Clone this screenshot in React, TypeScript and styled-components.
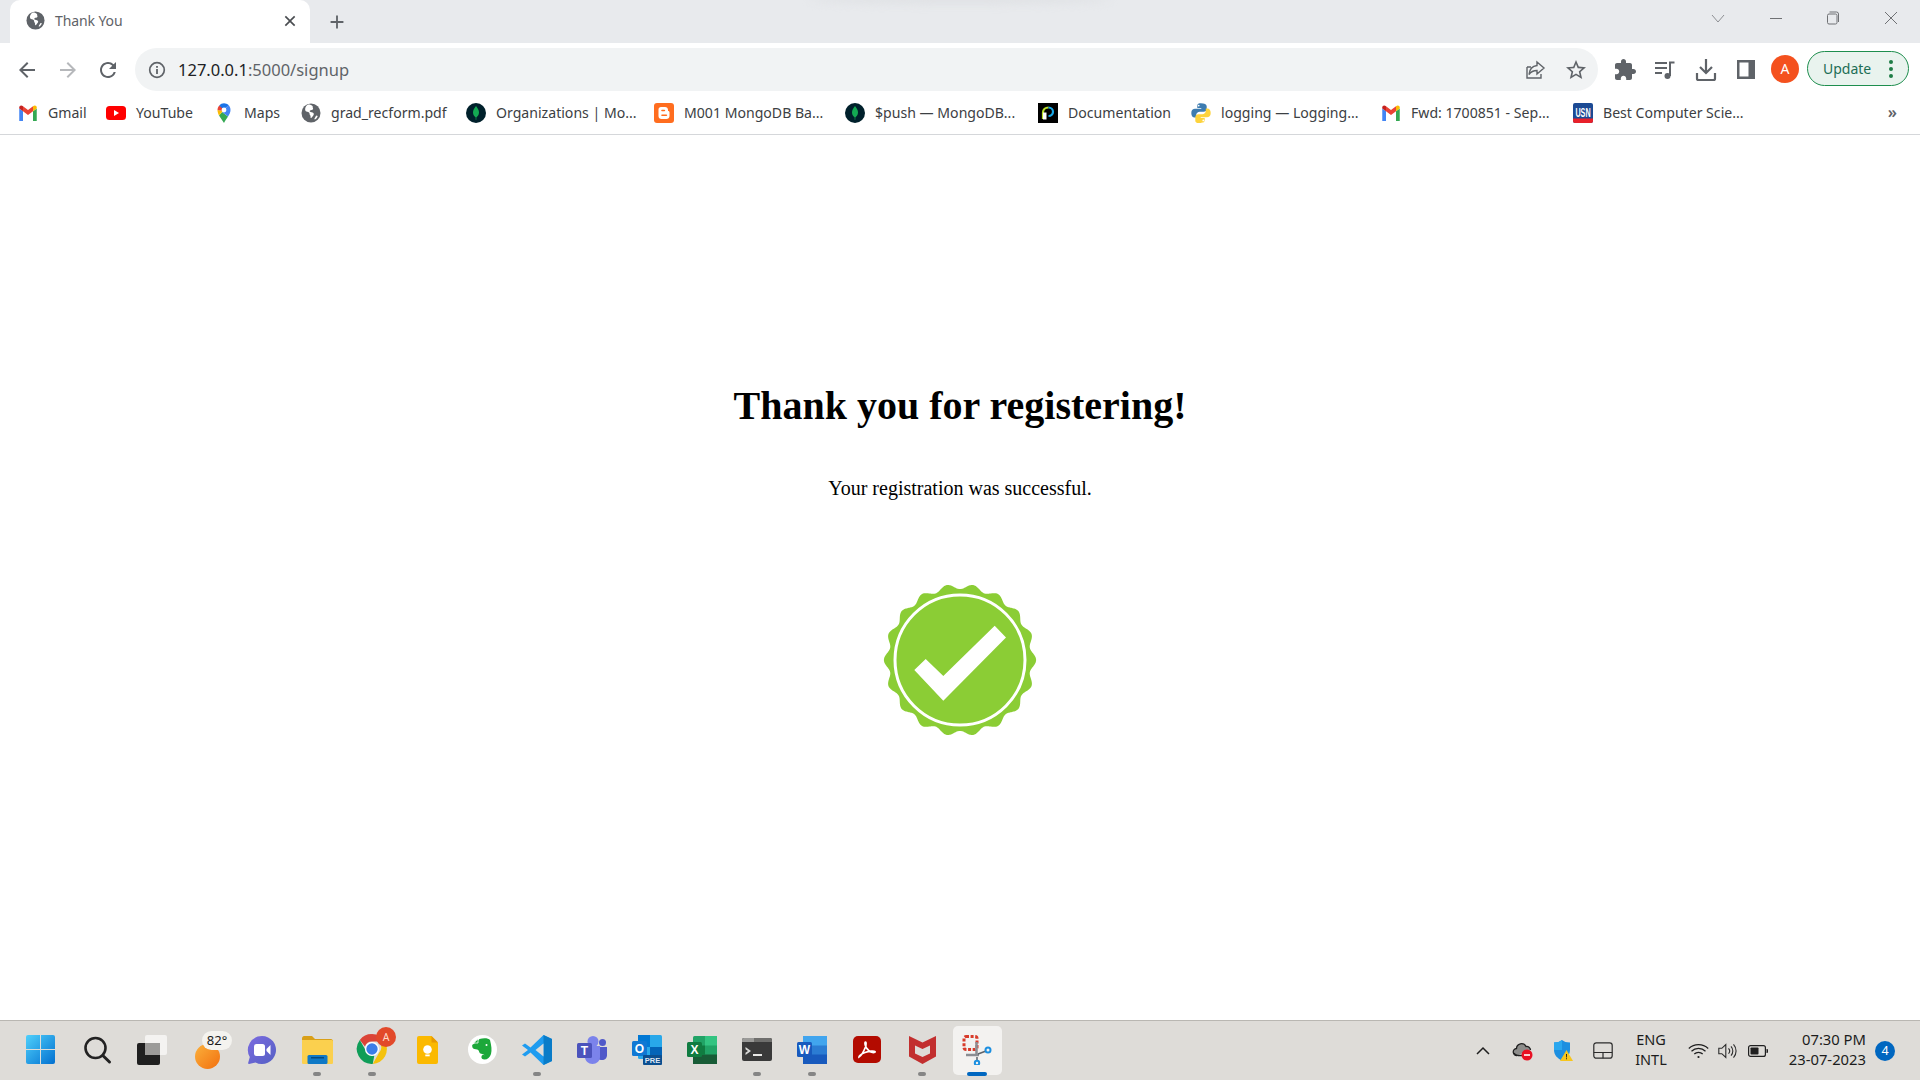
import React from "react";
import styled, { createGlobalStyle } from "styled-components";

const Global = createGlobalStyle`
  html, body { margin: 0; padding: 0; background: #fff; overflow: hidden; }
  #root { width: 1920px; height: 1080px; }
`;

const UI = `"Noto Sans", "Open Sans", "Liberation Sans", sans-serif`;

const Screen = styled.div`
  width: 1920px; height: 1080px; display: flex; flex-direction: column; font-family: ${UI}; background: #fff;
`;
const TabStrip = styled.div`
  height: 43px; flex: none; background: #e8eaed; display: flex; align-items: flex-end; padding-left: 10px; position: relative;
`;
const Smudge = styled.div`
  position: absolute; left: 810px; top: -6px; width: 300px; height: 10px; background: #dfe1e4; filter: blur(4px); border-radius: 50%;
`;
const Tab = styled.div`
  width: 300px; height: 43px; background: #fff; border-radius: 10px 10px 0 0; display: flex; align-items: center; padding: 0 10px 2px 16px; box-sizing: border-box; gap: 10px;
`;
const TabTitle = styled.span`
  flex: 1; font-size: 14px; color: #5f6368; letter-spacing: -0.1px; margin-top: -1px;
`;
const NewTab = styled.div`
  width: 24px; height: 24px; margin: 0 0 9px 15px; display: flex; align-items: center; justify-content: center; color: #5f6368;
`;
const WindowControls = styled.div`
  margin-left: auto; height: 36px; align-self: flex-start; display: flex; padding-right: 0;
`;
const WindowButton = styled.div<{ $w: number }>`
  width: ${p => p.$w}px; display: flex; align-items: center; justify-content: center; color: #6f7174;
`;
const Toolbar = styled.div`
  height: 48px; flex: none; display: flex; align-items: flex-end; background: #fff; position: relative;
`;
const NavButtons = styled.div`
  display: flex; width: 135px; height: 43px; padding-left: 7px; box-sizing: border-box; align-items: center;
`;
const NavIcon = styled.div<{ $w?: number }>`
  width: ${p => p.$w ?? 40.5}px; display: flex; justify-content: center; align-items: center; flex: none;
`;
const Omnibox = styled.div`
  width: 1463px; height: 43px; background: #f1f3f4; border-radius: 22px; display: flex; align-items: center; padding-left: 12px; box-sizing: border-box;
`;
const Url = styled.div`
  flex: 1; margin-left: 11px; font-size: 16.5px; color: #5f6368; white-space: nowrap;
  b { font-weight: 400; color: #202124; }
`;
const OmniActions = styled.div`
  display: flex; padding-right: 2px;
`;
const ToolActions = styled.div`
  height: 43px; display: flex; align-items: center; padding-left: 7px;
`;
const Avatar = styled.div`
  width: 28px; height: 28px; border-radius: 50%; background: #f4511e; color: #fff; font-size: 14px; display: flex; align-items: center; justify-content: center; margin: 0 8px 2px 5px;
`;
const UpdatePill = styled.div`
  width: 102px; height: 35px; border: 1.5px solid #1e8e4e; border-radius: 18px; background: #e9f3ee; box-sizing: border-box; color: #1d6e55; font-size: 14px; display: flex; align-items: center; padding-left: 15px; justify-content: space-between; padding-right: 15px; margin-bottom: 2px;
`;
const Dots = styled.div`
  display: flex; flex-direction: column; gap: 3px;
  i { width: 4px; height: 4px; border-radius: 50%; background: #1e7d45; display: block; }
`;
const Bookmarks = styled.div`
  height: 44px; flex: none; box-sizing: border-box; border-bottom: 1px solid #d5d7da; display: flex; align-items: center; padding-left: 18px; background: #fff;
`;
const Bookmark = styled.div<{ $w: number }>`
  width: ${p => p.$w}px; flex: none; display: flex; align-items: center; gap: 10px; font-size: 14.1px; color: #3c4043; white-space: nowrap;
`;
const More = styled.div`
  margin-left: auto; margin-right: 23px; font-size: 16px; color: #5f6368; font-weight: 600; margin-top: -2px;
`;
const Main = styled.main`
  flex: 1; display: flex; flex-direction: column; align-items: center; font-family: "Liberation Serif", serif; color: #000; padding-top: 246px; min-height: 0;
`;
const Heading = styled.h1`
  margin: 0; font-size: 40px; line-height: 50px; font-weight: 700;
`;
const Lead = styled.p`
  margin: 44.500px 0 0; font-size: 20px; line-height: 24px;
`;
const BadgeWrap = styled.div`
  margin-top: 80.500px; width: 160px; height: 160px;
`;
const Taskbar = styled.div`
  height: 60px; flex: none; box-sizing: border-box; background: #dedcd8; border-top: 1px solid #b9b7b2; display: flex; padding-left: 13px; align-items: stretch; color: #1c1c1c;
`;
const TaskCell = styled.div<{ $active?: boolean }>`
  width: 55px; position: relative; display: flex; align-items: center; justify-content: center; box-sizing: border-box; padding-bottom: 2px;
  &:first-child { margin-right: 1.5px; }
  &::before {
    content: ""; position: absolute; left: 3px; right: 3px; top: 5px; height: 49px; border-radius: 5px; background: ${p => (p.$active ? "#f3f2f0" : "transparent")};
  }
  & > * { position: relative; }
`;
const Indicator = styled.div<{ $active?: boolean }>`
  position: absolute !important; left: 50%; transform: translateX(-50%); bottom: 4px; height: 4px; border-radius: 2px;
  width: ${p => (p.$active ? 20 : 8)}px; background: ${p => (p.$active ? "#0067c0" : "#858585")};
`;
const Tray = styled.div`
  margin-left: auto; display: flex; align-items: center; padding-right: 25px; height: 100%;
`;
const TrayItem = styled.div<{ $w: number }>`
  width: ${p => p.$w}px; display: flex; justify-content: center; align-items: center; flex: none;
`;
const Lang = styled.div`
  width: 56px; flex: none; text-align: center; font-size: 14.500px; line-height: 20px; margin-bottom: 3px;
`;
const Clock = styled.div`
  width: 89px; flex: none; text-align: right; font-size: 14.800px; line-height: 20.500px; white-space: nowrap; margin-bottom: 3px;
`;
const Notice = styled.div`
  width: 20px; height: 20px; border-radius: 50%; background: #0067c0; color: #fff; font-size: 12.500px; display: flex; align-items: center; justify-content: center; margin-left: 9px;
`;
const Weather = styled.div`
  width: 40px; height: 40px; position: relative;
`;
const WeatherSun = styled.div`
  position: absolute; left: 8px; top: 14px; width: 25px; height: 25px; border-radius: 50%; background: linear-gradient(135deg, #fbb13c, #f2700f);
`;
const WeatherPill = styled.div`
  position: absolute; left: 15px; top: 1px; width: 30px; height: 19px; border-radius: 10px; background: #f4f3ef; font-size: 13px; line-height: 19px; text-align: center; color: #1a1a1a;
`;
const ChromeWrap = styled.div`
  width: 34px; height: 36px; position: relative;
`;
const ChromeBadge = styled.div`
  position: absolute; right: -7px; top: -5px; width: 20px; height: 20px; border-radius: 50%; background: #e2492a; color: #ffd9c9; font-size: 10.500px; display: flex; align-items: center; justify-content: center;
`;

const Ic = ({ s = 24, vb = 24, c = "#5f6368", d }: { s?: number; vb?: number; c?: string; d: string }) => (
  <svg width={s} height={s} viewBox={`0 0 ${vb} ${vb}`} fill={c}><path d={d} /></svg>
);

const Globe = ({ s = 20 }: { s?: number }) => (
  <svg width={s} height={s} viewBox="0 0 20 20">
    <circle cx="10" cy="10" r="9.500" fill="#5f6368" />
    <path d="M7 1.500C4.500 3 3.500 6 4.500 8c1 1.200 2.500 .6 3.500 1.400.8.7 .3 1.800 1 2.600.6.6.6 1.600.6 3l1-.2c1-1.600 2.400-2.600 2.200-4-.2-1.200-2-1.500-3.200-1.700-.8-.2-1.200-1-.6-1.600.8-.6 2.400-.2 3-1.200.4-.9-.5-1.700-.3-3C10.800 1.800 8.500 1.300 7 1.500z M15.500 12.500c-.8.600-1.500 2.200-2.200 3.500l.6.600c1.200-.8 2.400-2 2.800-3.700z" fill="#fff" />
  </svg>
);
const Gmail = () => (
  <svg width="20" height="20" viewBox="0 0 24 24">
    <path fill="#4285f4" d="M1.500 21.500h4.500V10L1.500 6.500z" />
    <path fill="#34a853" d="M18 21.500h4.500V6.500L18 10z" />
    <path fill="#ea4335" d="M6 10 12 14.500 18 10V4L12 8.500 6 4z" />
    <path fill="#fbbc04" d="M18 4v6l4.500-3.500V5.500c0-2.200-2.500-3.200-4.500-1.500z" />
    <path fill="#c5221f" d="M1.500 6.500 6 10V4C4 2.300 1.500 3.300 1.500 5.500z" />
  </svg>
);
const YouTube = () => (
  <svg width="20" height="20" viewBox="0 0 20 20">
    <rect y="3" width="20" height="14" rx="3.500" fill="#f00" />
    <path d="M8 7v6l5-3z" fill="#fff" />
  </svg>
);
const Maps = () => (
  <svg width="20" height="20" viewBox="0 0 20 20">
    <path fill="#34a853" d="M5 12.500 10 20c1-2.500 3-4.500 4-6.500L8 9z" />
    <path fill="#fbbc04" d="M3.500 7c0 2 .7 3.800 1.500 5.500L9 8z" />
    <path fill="#ea4335" d="M5.300 2.500C4.200 3.600 3.500 5.200 3.500 7L9 8 9.500 4.500z" />
    <path fill="#1a73e8" d="M10 0.300c-1.800 0-3.500.9-4.700 2.200L9.300 6.500 14 3 14.500 2C13.300 1 11.700.3 10 .3z" />
    <path fill="#4285f4" d="M14.500 2 8 9l6 4.500c1.300-2 2.500-4 2.500-6.500 0-2-.8-3.800-2-5z" />
    <circle cx="10" cy="7" r="2.400" fill="#fff" />
  </svg>
);
const Mongo = () => (
  <svg width="20" height="20" viewBox="0 0 20 20">
    <circle cx="10" cy="10" r="10" fill="#00202b" />
    <path d="M10 3c1.800 2.300 3 4 3 6.500 0 2.400-1.500 4-2.600 4.700L10.200 17h-.4l-.2-2.800C8.500 13.500 7 12 7 9.500 7 7 8.200 5.300 10 3z" fill="#13aa52" />
  </svg>
);
const Blogger = () => (
  <svg width="20" height="20" viewBox="0 0 20 20">
    <rect width="20" height="20" rx="3" fill="#ff6d1f" />
    <path d="M7 4h4c1.800 0 3 1.300 3 3v1c1 0 1.500.5 1.500 1.500V13c0 1.800-1.400 3-3 3H7.500C5.700 16 4.500 14.700 4.500 13V6.500C4.500 5 5.500 4 7 4z" fill="#fff" />
    <rect x="7.200" y="6.700" width="4" height="1.600" rx=".8" fill="#ff6d1f" />
    <rect x="7.200" y="11.500" width="6" height="1.600" rx=".8" fill="#ff6d1f" />
  </svg>
);
const DocIcon = () => (
  <svg width="20" height="20" viewBox="0 0 20 20">
    <rect width="20" height="20" fill="#000" />
    <path d="M5 16V9.500C5 6.500 7.500 4.500 10.500 4.500" fill="none" stroke="#b9e02a" strokeWidth="2.200" />
    <path d="M10.500 4.500c2.500 0 4.500 1.800 4.500 4.300 0 2.300-1.800 4.200-4.500 4.200" fill="none" stroke="#18a8e8" strokeWidth="2.200" />
    <path d="M5 9.500h3.500v7H5z" fill="#fff" />
  </svg>
);
const Python = () => (
  <svg width="20" height="20" viewBox="0 0 20 20">
    <path fill="#3d7cb0" d="M9.800.3C6.500.3 6.300 1.700 6.300 3.200V5h4v.7H4C2 5.700.3 7 .3 10s1.500 4.500 3.300 4.500h1.600v-2.300c0-2 1.700-3.500 3.600-3.500h3.900c1.700 0 3-1.300 3-3V3.200C15.700 1.500 13.400.3 9.800.3zM7.700 1.700a.9.900 0 1 1 0 1.800.9.900 0 0 1 0-1.800z" />
    <path fill="#fdd33c" d="M10.200 19.700c3.300 0 3.500-1.400 3.500-2.900V15h-4v-.7H16c2 0 3.700-1.300 3.700-4.300s-1.500-4.500-3.300-4.500h-1.600v2.300c0 2-1.700 3.500-3.600 3.500H7.300c-1.700 0-3 1.300-3 3v3.500c0 1.700 2.300 2.900 5.900 2.900zm2.100-1.400a.9.900 0 1 1 0-1.800.9.900 0 0 1 0 1.800z" />
  </svg>
);
const Usn = () => (
  <svg width="20" height="20" viewBox="0 0 20 20">
    <rect width="20" height="20" rx="2" fill="#1c4a94" />
    <path d="M0 15.500h20V18a2 2 0 0 1-2 2H2a2 2 0 0 1-2-2z" fill="#e8202a" />
    <text transform="translate(10 13.500) scale(.8 1.400)" textAnchor="middle" fontSize="9" fontWeight="700" fill="#fff" fontFamily="Liberation Sans, sans-serif">USN</text>
  </svg>
);

const Badge = () => {
  const pts: string[] = [];
  const N = 720;
  for (let i = 0; i < N; i++) {
    const t = (i / N) * Math.PI * 2;
    const r = 73.5 - 2.6 * Math.cos(18 * t);
    pts.push(`${(80 + r * Math.sin(t)).toFixed(2)},${(80 - r * Math.cos(t)).toFixed(2)}`);
  }
  return (
    <svg width="160" height="160" viewBox="0 0 160 160">
      <polygon points={pts.join(" ")} fill="#8bcd35" />
      <circle cx="80" cy="80" r="65" fill="none" stroke="#fff" strokeWidth="3" />
      <path d="M34.300 90 45.700 79 63.300 96 114.700 45.700 126 57.400 63.300 120.700z" fill="#fff" />
    </svg>
  );
};

const WinLogo = () => (
  <svg width="29" height="29" viewBox="0 0 29 29">
    <defs>
      <linearGradient id="wl" x1="0" y1="0" x2="1" y2="1">
        <stop offset="0" stopColor="#4fd0fb" />
        <stop offset="1" stopColor="#0270d0" />
      </linearGradient>
    </defs>
    <rect width="29" height="29" rx="2" fill="url(#wl)" />
    <path d="M14.500 0v29M0 14.500h29" stroke="#dedcd8" strokeWidth="1" />
  </svg>
);
const SearchIcon = () => (
  <svg width="30" height="30" viewBox="0 0 30 30" fill="none" stroke="#222" strokeLinecap="round">
    <circle cx="13.500" cy="13" r="10" strokeWidth="2.600" />
    <path d="M20.800 20.500 27.500 27" strokeWidth="3" />
  </svg>
);
const TaskView = () => (
  <svg width="31" height="30" viewBox="0 0 31 30">
    <rect x="0" y="8" width="23" height="22" rx="2" fill="#1f1f1f" />
    <rect x="8" y="0" width="22" height="20" rx="2" fill="#f4f3f1" />
    <rect x="8" y="8" width="15" height="12" fill="#9c9b99" />
  </svg>
);
const Chat = () => (
  <svg width="30" height="30" viewBox="0 0 30 30">
    <defs>
      <linearGradient id="ch" x1="0" y1="0" x2="1" y2="1">
        <stop offset="0" stopColor="#7b6be0" />
        <stop offset="1" stopColor="#5560c4" />
      </linearGradient>
    </defs>
    <path d="M15 1a14 14 0 1 1-6.500 26.400L2 29c-.8 0-1-.7-.8-1.300L2.800 22A14 14 0 0 1 15 1z" fill="url(#ch)" />
    <rect x="7" y="9" width="11" height="12" rx="2.500" fill="#fff" />
    <path d="M19.500 14 23.500 10v10l-4-4z" fill="#fff" />
  </svg>
);
const Files = () => (
  <svg width="31" height="28" viewBox="0 0 31 28">
    <path d="M0 2.500C0 1 1 0 2 0h8l3 3h16c1 0 2 1 2 2v4H0z" fill="#d9a018" />
    <path d="M0 4h29.500c1 0 1.500.7 1.500 1.500V26.500c0 1-.7 1.500-1.500 1.500h-28C.7 28 0 27.500 0 26.500z" fill="#fbd04e" />
    <rect x="5.500" y="19" width="20" height="9" rx="1.500" fill="#0f79c6" />
    <rect x="9" y="21" width="13" height="1.500" fill="#064a80" />
  </svg>
);
const Chrome = () => (
  <svg width="34" height="34" viewBox="0 0 48 48">
    <path fill="#db4437" d="M24 3a21 21 0 0 1 18.200 10.500H24a10.500 10.500 0 0 0-9.900 7.100L6.800 11.400A21 21 0 0 1 24 3z" />
    <path fill="#f4c20d" d="M42.200 13.500A21 21 0 0 1 25 45l9-15.600a10.500 10.500 0 0 0-1-15.900z" />
    <path fill="#0f9d58" d="M25 45A21 21 0 0 1 6.800 11.400l9 15.800a10.500 10.500 0 0 0 11.500 5.800z" />
    <circle cx="24" cy="24" r="10" fill="#fff" />
    <circle cx="24" cy="24" r="8" fill="#3b7de8" />
  </svg>
);
const Keep = () => (
  <svg width="21" height="28" viewBox="0 0 21 28">
    <path d="M2 0h12.500L21 6.500V26a2 2 0 0 1-2 2H2a2 2 0 0 1-2-2V2a2 2 0 0 1 2-2z" fill="#fbb900" />
    <path d="M14.500 0 21 6.500h-6.500z" fill="#e89a00" />
    <circle cx="10.500" cy="13.500" r="4.300" fill="#fff" />
    <rect x="8.300" y="18.500" width="4.400" height="1.800" fill="#fff" />
  </svg>
);
const Evernote = () => (
  <svg width="29" height="29" viewBox="0 0 29 29">
    <circle cx="14.500" cy="14.500" r="14.500" fill="#fff" />
    <path d="M9 6.500 11.500 4c4-1.200 9-1 10.500 1 1.500 6 2 10 1 14-1 3.500-3.500 5.500-6.500 5.500-2 0-3.500-1-3-3 .3-1.500 2-1.800 3.200-1-.6-1-2.500-1.200-3.500-1.700-2.200-.6-1.800-2.500-3-3.800-1-1-3.700-.5-5-1.500-1-1-1-2-1-3.500 0-.3.3-.5.7-.5z" fill="#1ca83a" />
    <path d="M5.700 8H10V3.800z" fill="#1ca83a" stroke="#fff" strokeWidth=".8" />
    <circle cx="18.500" cy="10" r="1" fill="#fff" />
  </svg>
);
const VsCode = () => (
  <svg width="30" height="30" viewBox="0 0 30 30">
    <path d="M21.500 0 30 4v22l-8.500 4-13-12.500-5.500 4L0 19.500 6 15 0 10.500 3 8.500l5.500 4z" fill="#1f9cf0" />
    <path d="M21.500 0 30 4v22l-8.500 4z" fill="#0a7cc8" />
    <path d="M21.500 8.500v13L13.500 15z" fill="#dedcd8" />
  </svg>
);
const Teams = () => (
  <svg width="30" height="28" viewBox="0 0 30 28">
    <circle cx="16" cy="5.500" r="5.500" fill="#7b83eb" />
    <circle cx="25.500" cy="6.500" r="3.500" fill="#5059c9" />
    <path d="M21 11h9v8c0 3-2 5-5 5-1.500 0-3-.5-4-1.500z" fill="#5059c9" />
    <path d="M8 10h15v11c0 4-3.500 7-7.500 7S8 25 8 21z" fill="#7b83eb" />
    <rect x="0" y="7" width="15" height="15" rx="1.500" fill="#4b53bc" />
    <text x="7.500" y="18.500" textAnchor="middle" fontSize="12" fontWeight="700" fill="#fff" fontFamily="Liberation Sans, sans-serif">T</text>
  </svg>
);
const Outlook = () => (
  <svg width="30" height="30" viewBox="0 0 30 30">
    <rect x="6" y="0" width="24" height="24" rx="1.500" fill="#28a8ea" />
    <rect x="6" y="0" width="12" height="12" fill="#0078d4" />
    <rect x="18" y="12" width="12" height="12" fill="#0364b8" />
    <rect x="0" y="6" width="15" height="15" rx="1.500" fill="#0f78d4" />
    <text x="7.500" y="18" textAnchor="middle" fontSize="12" fontWeight="700" fill="#fff" fontFamily="Liberation Sans, sans-serif">O</text>
    <rect x="11" y="20" width="19" height="10" rx="1" fill="#0b4f90" />
    <text x="20.500" y="28" textAnchor="middle" fontSize="7.500" fontWeight="700" fill="#dfe8f4" fontFamily="Liberation Sans, sans-serif">PRE</text>
  </svg>
);
const Excel = () => (
  <svg width="30" height="28" viewBox="0 0 30 28">
    <rect x="6" y="0" width="24" height="28" rx="1.500" fill="#21a366" />
    <rect x="18" y="0" width="12" height="9.500" fill="#33c481" />
    <rect x="6" y="9.500" width="12" height="9.500" fill="#107c41" />
    <rect x="18" y="18.500" width="12" height="9.500" fill="#185c37" />
    <rect x="6" y="19" width="12" height="9" fill="#185c37" />
    <rect x="0" y="6" width="15" height="15" rx="1.500" fill="#107c41" />
    <text x="7.500" y="18" textAnchor="middle" fontSize="12" fontWeight="700" fill="#fff" fontFamily="Liberation Sans, sans-serif">X</text>
  </svg>
);
const Terminal = () => (
  <svg width="30" height="23" viewBox="0 0 30 23">
    <rect width="30" height="23" rx="2" fill="#3a3a3a" />
    <path d="M0 2a2 2 0 0 1 2-2h10v4H0z" fill="#9a9a98" />
    <path d="M12 0h16a2 2 0 0 1 2 2v2H12z" fill="#6f6f6d" />
    <path d="M3.500 9 9 13l-5.500 4v-2.200L6 13 3.500 11.200z" fill="#d8d8d6" />
    <rect x="11" y="16" width="9" height="2" fill="#e8e8e6" />
  </svg>
);
const Word = () => (
  <svg width="30" height="28" viewBox="0 0 30 28">
    <rect x="6" y="0" width="24" height="28" rx="1.500" fill="#2b7cd3" />
    <rect x="6" y="0" width="24" height="9.500" fill="#41a5ee" />
    <rect x="6" y="18.500" width="24" height="9.500" fill="#185abd" />
    <rect x="0" y="6" width="15" height="15" rx="1.500" fill="#185abd" />
    <text x="7.500" y="18" textAnchor="middle" fontSize="12" fontWeight="700" fill="#fff" fontFamily="Liberation Sans, sans-serif">W</text>
  </svg>
);
const Acrobat = () => (
  <svg width="28" height="27" viewBox="0 0 28 27">
    <rect width="28" height="27" rx="5" fill="#b30b00" />
    <path d="M6 21c2-1 4.500-5 6.500-10 .7-2 .8-5 0-5-1 0-.6 3.500 1 6 1.500 2.300 3.500 4 6 4.500 2 .3 3-.5 2.500-1-1-1-6-.5-10 1-3 1.200-6 3-6 4.500z" fill="none" stroke="#fff" strokeWidth="1.700" />
  </svg>
);
const McAfee = () => (
  <svg width="27" height="29" viewBox="0 0 27 29">
    <path d="M0 1 13.500 7.500 27 1v20.500L13.500 29 0 21.500z" fill="#c22f2f" />
    <path d="M6 10.500 13.500 14 21 10.500v8L13.500 22 6 18.500z" fill="#dedcd8" />
  </svg>
);
const Snip = () => (
  <svg width="30" height="30" viewBox="0 0 30 30" fill="none">
    <rect x="2" y="1.500" width="13" height="13" rx="2" stroke="#d83b2a" strokeWidth="3" strokeDasharray="3 1.600" />
    <path d="M4 20h13M14.500 7v14" stroke="#8a8d92" strokeWidth="2.500" />
    <path d="M16 19 24 16M15 22v4" stroke="#5f6368" strokeWidth="1.500" />
    <circle cx="26" cy="15" r="2.500" stroke="#1c8fe0" strokeWidth="2" />
    <circle cx="15" cy="28" r="2.200" stroke="#1c8fe0" strokeWidth="2" />
  </svg>
);

const Cloud = () => (
  <svg width="22" height="20" viewBox="0 0 22 20">
    <path d="M5 14.500a3.500 3.500 0 0 1-.5-7A5 5 0 0 1 14 5.500a3.800 3.800 0 0 1 4.500 3.500" fill="#8d8d8b" stroke="#1f1f1f" strokeWidth="1.300" />
    <path d="M2 12c1 2 2 2.500 4 2.500h6" stroke="#1f1f1f" strokeWidth="1.300" fill="none" />
    <circle cx="15" cy="14" r="5.500" fill="#e81123" />
    <rect x="12" y="13.200" width="6" height="1.600" fill="#fff" />
  </svg>
);
const Shield = () => (
  <svg width="20" height="21" viewBox="0 0 20 21">
    <path d="M9 0c2 1.700 4.500 2.500 8 2.500V10c0 5-3.500 8.500-8 10.500C4.500 18.500 1 15 1 10V2.500C4.500 2.500 7 1.700 9 0z" fill="#1c8fe0" />
    <path d="M9 0v10H1V2.500C4.500 2.500 7 1.700 9 0z" fill="#2aa7ee" />
    <path d="M13.500 10 20 21H7z" fill="#f7c61c" />
    <path d="M13 14h1l-.1 3.500h-.8zM13 18.200h1v1h-1z" fill="#222" />
  </svg>
);
const Touchpad = () => (
  <svg width="20" height="17" viewBox="0 0 20 17" fill="none" stroke="#2b2b2b" strokeWidth="1.200">
    <rect x=".8" y=".8" width="18.400" height="15.400" rx="2.500" />
    <path d="M.8 10.500h18.400M10 10.500v5.700" />
  </svg>
);
const Wifi = () => (
  <svg width="21" height="16" viewBox="0 0 21 16" fill="none" stroke="#1f1f1f" strokeWidth="1.200">
    <path d="M.8 5.500a14 14 0 0 1 19.400 0M3.500 8.300a10 10 0 0 1 14 0M6.300 11a6 6 0 0 1 8.400 0" />
    <circle cx="10.500" cy="14" r="1.100" fill="#1f1f1f" stroke="none" />
  </svg>
);
const Volume = () => (
  <svg width="20" height="16" viewBox="0 0 20 16" fill="none" stroke="#2b2b2b" strokeWidth="1.100">
    <path d="M.8 5.300h3l4-3.800v13l-4-3.800h-3z" />
    <path d="M10.500 5.300a4 4 0 0 1 0 5.400M13 3.300a7 7 0 0 1 0 9.400M15.500 1.300a10 10 0 0 1 0 13.400" />
  </svg>
);
const Battery = () => (
  <svg width="20" height="12" viewBox="0 0 20 12">
    <rect x=".6" y=".6" width="16.800" height="10.800" rx="2" fill="none" stroke="#1f1f1f" strokeWidth="1.200" />
    <rect x="2.500" y="2.500" width="8" height="7" rx=".8" fill="#1f1f1f" />
    <path d="M18.500 4h.5a1 1 0 0 1 1 1v2a1 1 0 0 1-1 1h-.5z" fill="#1f1f1f" />
  </svg>
);

const bookmarks: { w: number; icon: React.ReactNode; label: string }[] = [
  { w: 88, icon: <Gmail />, label: "Gmail" },
  { w: 108, icon: <YouTube />, label: "YouTube" },
  { w: 87, icon: <Maps />, label: "Maps" },
  { w: 165, icon: <Globe />, label: "grad_recform.pdf" },
  { w: 188, icon: <Mongo />, label: "Organizations | Mo..." },
  { w: 191, icon: <Blogger />, label: "M001 MongoDB Ba..." },
  { w: 193, icon: <Mongo />, label: "$push — MongoDB..." },
  { w: 153, icon: <DocIcon />, label: "Documentation" },
  { w: 190, icon: <Python />, label: "logging — Logging..." },
  { w: 192, icon: <Gmail />, label: "Fwd: 1700851 - Sep..." },
  { w: 200, icon: <Usn />, label: "Best Computer Scie..." },
];

const apps: { node: React.ReactNode; open?: boolean; active?: boolean }[] = [
  { node: <WinLogo /> },
  { node: <SearchIcon /> },
  { node: <TaskView /> },
  { node: <Weather><WeatherSun /><WeatherPill>82°</WeatherPill></Weather> },
  { node: <Chat /> },
  { node: <Files />, open: true },
  { node: <ChromeWrap><Chrome /><ChromeBadge>A</ChromeBadge></ChromeWrap>, open: true },
  { node: <Keep /> },
  { node: <Evernote /> },
  { node: <VsCode />, open: true },
  { node: <Teams /> },
  { node: <Outlook /> },
  { node: <Excel /> },
  { node: <Terminal />, open: true },
  { node: <Word />, open: true },
  { node: <Acrobat /> },
  { node: <McAfee />, open: true },
  { node: <Snip />, active: true },
];

export default function App() {
  return (
    <Screen>
      <Global />
      <TabStrip>
        <Smudge />
        <Tab>
          <Globe s={19} />
          <TabTitle>Thank You</TabTitle>
          <Ic s={20} d="M18.300 7.100 16.900 5.700 12 10.600 7.100 5.700 5.700 7.100l4.900 4.900-4.900 4.900 1.400 1.400 4.900-4.900 4.900 4.900 1.400-1.400-4.900-4.900z" c="#4a4d51" />
        </Tab>
        <NewTab>
          <Ic s={22} d="M19 13h-6v6h-2v-6H5v-2h6V5h2v6h6v2z" />
        </NewTab>
        <WindowControls>
          <WindowButton $w={58}>
            <svg width="14" height="14" viewBox="0 0 14 14" fill="none" stroke="#8d8f93" strokeWidth="1"><path d="M1 4l6 7 6-7" /></svg>
          </WindowButton>
          <WindowButton $w={57}>
            <svg width="14" height="14" viewBox="0 0 14 14" fill="none" stroke="#6f7174"><path d="M1 7.500h12" /></svg>
          </WindowButton>
          <WindowButton $w={58}>
            <svg width="14" height="14" viewBox="0 0 14 14" fill="none" stroke="#6f7174"><rect x="1.500" y="3" width="9.500" height="10" rx="1.500" /><path d="M3.500 1h7a2 2 0 0 1 2 2v8" /></svg>
          </WindowButton>
          <WindowButton $w={58}>
            <svg width="14" height="14" viewBox="0 0 14 14" fill="none" stroke="#6f7174"><path d="M1 1l12 12M13 1 1 13" /></svg>
          </WindowButton>
        </WindowControls>
      </TabStrip>
      <Toolbar>
        <NavButtons>
          <NavIcon><Ic d="M20 11H7.830l5.590-5.590L12 4l-8 8 8 8 1.410-1.410L7.830 13H20v-2z" /></NavIcon>
          <NavIcon><Ic c="#b6b8bb" d="M4 11h12.170l-5.590-5.590L12 4l8 8-8 8-1.410-1.410L16.170 13H4v-2z" /></NavIcon>
          <NavIcon><Ic d="M17.650 6.350A7.950 7.950 0 0 0 12 4c-4.420 0-7.990 3.580-7.990 8s3.570 8 7.990 8c3.730 0 6.840-2.550 7.730-6h-2.080A5.990 5.990 0 0 1 12 18c-3.310 0-6-2.690-6-6s2.690-6 6-6c1.660 0 3.140.690 4.220 1.780L13 11h7V4l-2.350 2.350z" /></NavIcon>
        </NavButtons>
        <Omnibox>
          <svg width="20" height="20" viewBox="0 0 20 20" fill="none">
            <circle cx="10" cy="10" r="7.300" stroke="#5f6368" strokeWidth="1.700" />
            <rect x="9.100" y="9" width="1.800" height="5" fill="#5f6368" />
            <rect x="9.100" y="6" width="1.800" height="1.800" fill="#5f6368" />
          </svg>
          <Url><b>127.0.0.1</b>:5000/signup</Url>
          <OmniActions>
            <NavIcon>
              <svg width="22" height="22" viewBox="0 0 22 22" fill="none" stroke="#5f6368" strokeWidth="1.400">
                <path d="M3 8v11h14v-4M3 8h4" />
                <path d="M13 3l7 6-7 6v-3.500c-3.500 0-6 1-8 4 .5-5 3.500-8.500 8-9z" />
              </svg>
            </NavIcon>
            <NavIcon>
              <Ic d="M22 9.240l-7.190-.620L12 2 9.190 8.630 2 9.240l5.460 4.730L5.820 21 12 17.270 18.180 21l-1.630-7.030L22 9.240zM12 15.400l-3.760 2.270 1-4.280-3.320-2.880 4.380-.380L12 6.100l1.710 4.040 4.380.380-3.320 2.880 1 4.280L12 15.400z" />
            </NavIcon>
          </OmniActions>
        </Omnibox>
        <ToolActions>
          <NavIcon $w={40}>
            <Ic d="M20.500 11H19V7c0-1.100-.9-2-2-2h-4V3.500C13 2.120 11.880 1 10.500 1S8 2.120 8 3.500V5H4c-1.100 0-1.990.9-1.990 2v3.800H3.500c1.490 0 2.700 1.210 2.700 2.700s-1.210 2.700-2.700 2.700H2V20c0 1.100.9 2 2 2h3.800v-1.500c0-1.490 1.210-2.700 2.700-2.700 1.490 0 2.700 1.210 2.700 2.700V22H17c1.100 0 2-.9 2-2v-4h1.500c1.380 0 2.500-1.120 2.500-2.500S21.880 11 20.500 11z" />
          </NavIcon>
          <NavIcon $w={40}>
            <svg width="22" height="20" viewBox="0 0 22 20" fill="none" stroke="#5f6368" strokeWidth="2">
              <path d="M1 3h12M1 8h12M1 13h7" />
              <path d="M16 16V2.500h4.500" />
              <circle cx="13.500" cy="16" r="3" fill="#5f6368" stroke="none" />
            </svg>
          </NavIcon>
          <NavIcon $w={41}>
            <svg width="22" height="24" viewBox="0 0 22 24" fill="none" stroke="#5f6368" strokeWidth="2.200">
              <path d="M11 1v13M5 9l6 6 6-6" />
              <path d="M2 15v5.500a1.500 1.500 0 0 0 1.500 1.500h15a1.500 1.500 0 0 0 1.500-1.500V15" />
            </svg>
          </NavIcon>
          <NavIcon $w={40}>
            <svg width="18" height="19" viewBox="0 0 18 19">
              <path fillRule="evenodd" fill="#5f6368" d="M0 0h18v19H0zM2.500 2.500v14h9v-14z" />
            </svg>
          </NavIcon>
          <Avatar>A</Avatar>
          <UpdatePill>
            <span>Update</span>
            <Dots><i /><i /><i /></Dots>
          </UpdatePill>
        </ToolActions>
      </Toolbar>
      <Bookmarks>
        {bookmarks.map(b => (
          <Bookmark key={b.label} $w={b.w}>{b.icon}<span>{b.label}</span></Bookmark>
        ))}
        <More>»</More>
      </Bookmarks>
      <Main>
        <Heading>Thank you for registering!</Heading>
        <Lead>Your registration was successful.</Lead>
        <BadgeWrap><Badge /></BadgeWrap>
      </Main>
      <Taskbar>
        {apps.map((a, i) => (
          <TaskCell key={i} $active={a.active}>
            {a.node}
            {(a.open || a.active) && <Indicator $active={a.active} />}
          </TaskCell>
        ))}
        <Tray>
          <TrayItem $w={40}>
            <svg width="14" height="9" viewBox="0 0 14 9" fill="none" stroke="#1f1f1f" strokeWidth="1.500"><path d="M1 8l6-6 6 6" /></svg>
          </TrayItem>
          <TrayItem $w={40}><Cloud /></TrayItem>
          <TrayItem $w={40}><Shield /></TrayItem>
          <TrayItem $w={40}><Touchpad /></TrayItem>
          <Lang>ENG<br />INTL</Lang>
          <TrayItem $w={38}><Wifi /></TrayItem>
          <TrayItem $w={22}><Volume /></TrayItem>
          <TrayItem $w={38}><Battery /></TrayItem>
          <Clock>07:30 PM<br />23-07-2023</Clock>
          <Notice>4</Notice>
        </Tray>
      </Taskbar>
    </Screen>
  );
}
